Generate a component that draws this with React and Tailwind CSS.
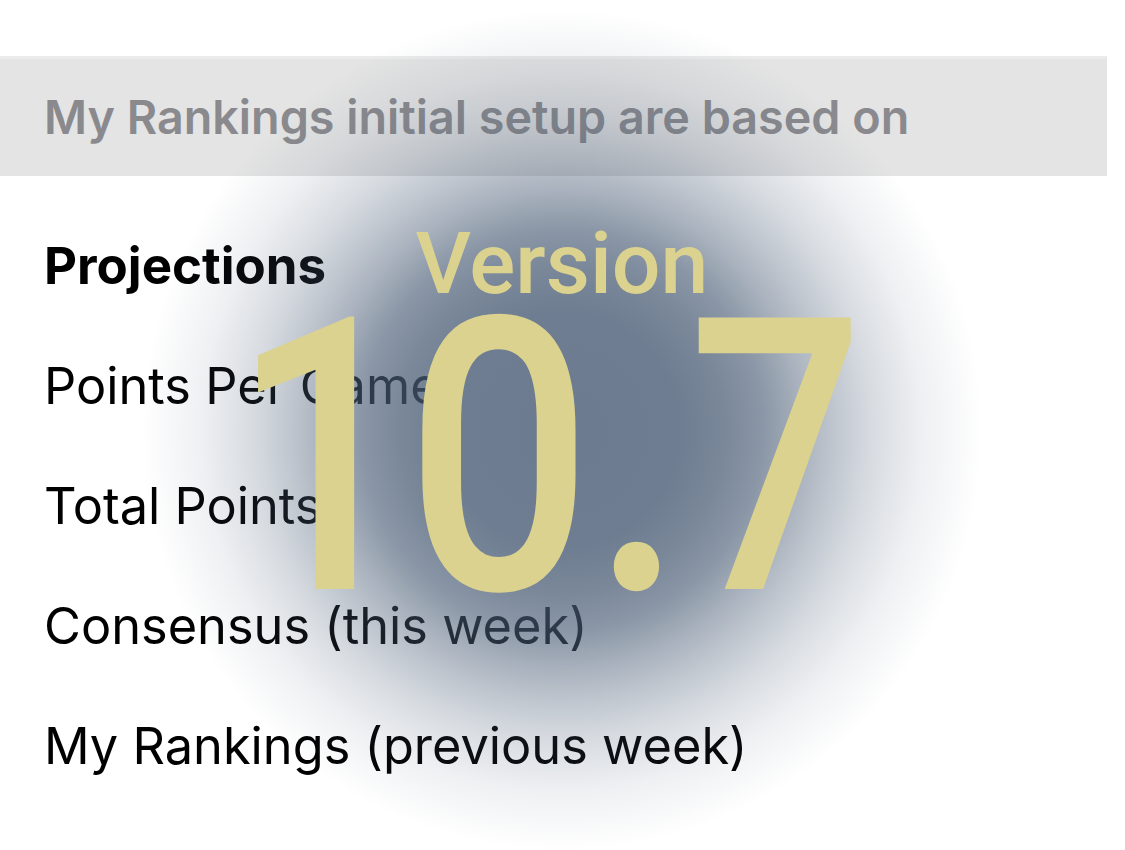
const rows = [
  { label: "Projections", bold: true },
  { label: "Points Per Game" },
  { label: "Total Points" },
  { label: "Consensus (this week)" },
  { label: "My Rankings (previous week)" },
];

// Settings list with the "what's new" version splash on top
const App = () => {
  return (
    <div className="relative h-[850px] w-[1125px] overflow-hidden bg-white font-['Inter',sans-serif] text-black">
      <div className="h-[56px]" />
      <div className="flex h-[120px] w-[1107px] items-center border-t-[3px] border-[#ebebeb] bg-[#e4e4e4] px-[44px]">
        <p className="text-[46.7px] font-semibold text-[#8a8a8e]">
          My Rankings initial setup are based on
        </p>
      </div>

      <div className="mt-[30px] flex flex-col">
        {rows.map((row) => (
          <div key={row.label} className="flex h-[120px] items-center px-[44px]">
            <span
              className={
                row.bold ? "text-[51px] font-bold" : "text-[50.5px] font-normal"
              }
            >
              {row.label}
            </span>
          </div>
        ))}
      </div>

      <div className="absolute left-[142px] top-[10px] flex h-[840px] w-[840px] flex-col items-center rounded-full bg-[radial-gradient(circle_closest-side,rgba(71,90,115,0.8)_0%,rgba(71,90,115,0.79)_28%,rgba(71,90,115,0.72)_39%,rgba(71,90,115,0.63)_48%,rgba(71,90,115,0.47)_57%,rgba(71,90,115,0.34)_65%,rgba(71,90,115,0.21)_74%,rgba(71,90,115,0.09)_86%,rgba(71,90,115,0)_100%)] pt-[211px] font-['Roboto',sans-serif] text-[#dbd28f]">
        <div className="text-[86px] font-medium leading-none">Version</div>
        <div className="-mt-[39px] flex scale-x-[0.86] items-baseline text-[382px] font-medium leading-none">
          <span>1</span>
          <span className="-ml-[14px]">0</span>
          <span>.</span>
          <span className="mr-[20px] ml-[6px] inline-block origin-left scale-x-[0.94]">7</span>
        </div>
      </div>
    </div>
  );
};

export default App;
